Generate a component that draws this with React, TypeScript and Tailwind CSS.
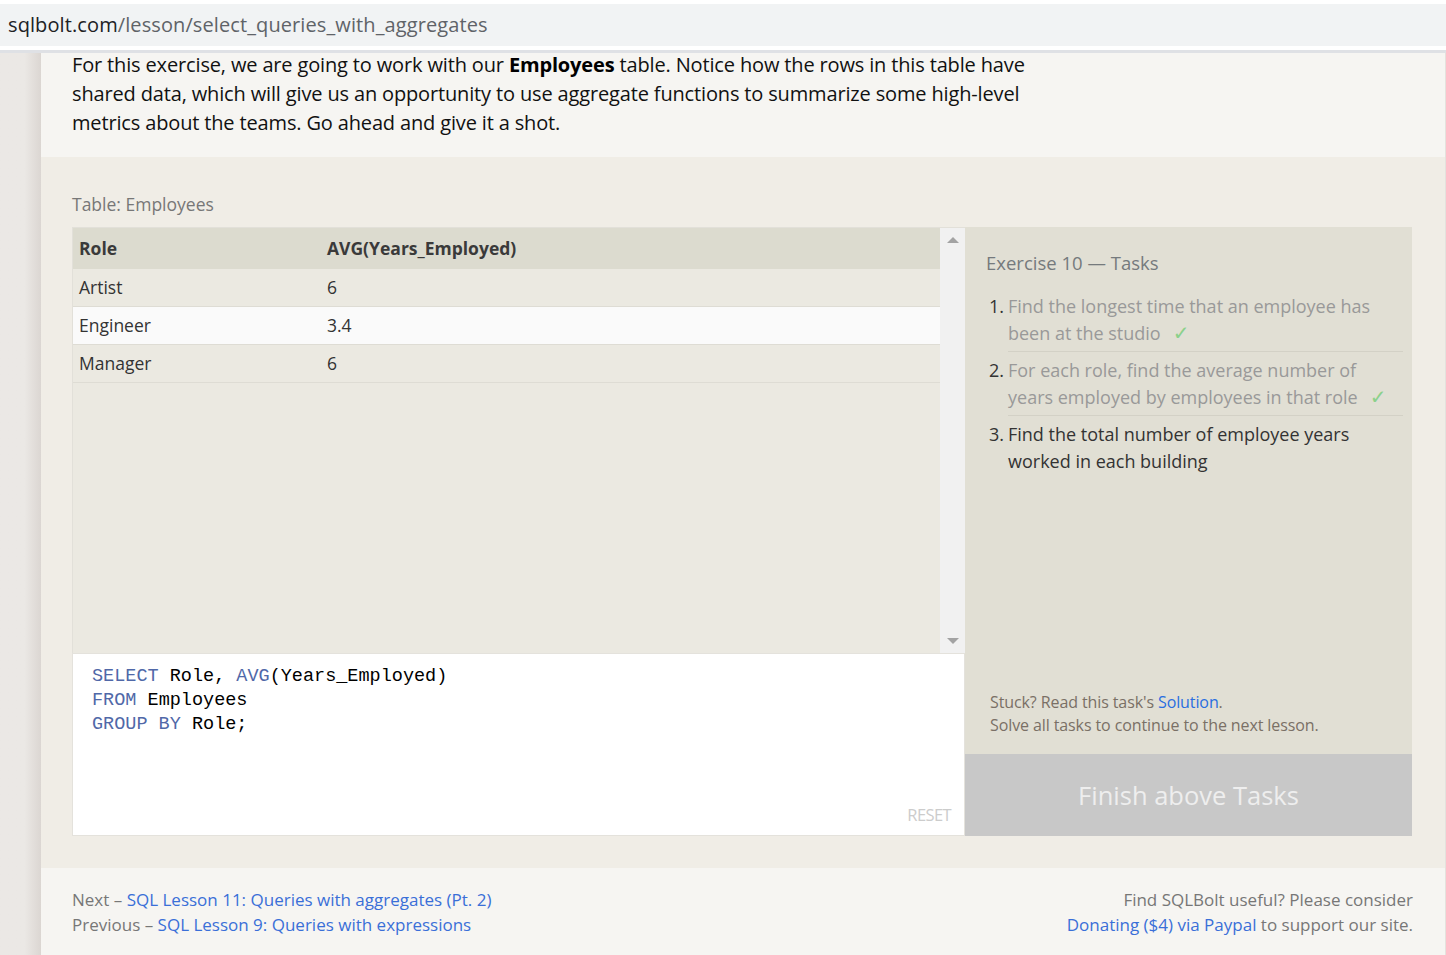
import React from "react";

const sans = "font-['Open_Sans',sans-serif]";

const rows = [
  { role: "Artist", avg: "6", hi: false },
  { role: "Engineer", avg: "3.4", hi: true },
  { role: "Manager", avg: "6", hi: false },
];

const tasks = [
  { text: "Find the longest time that an employee has been at the studio", done: true },
  { text: "For each role, find the average number of years employed by employees in that role", done: true },
  { text: "Find the total number of employee years worked in each building", done: false },
];

const Kw: React.FC<{ children: React.ReactNode }> = ({ children }) => (
  <span className="text-[#5068a8]">{children}</span>
);

export default function App() {
  return (
    <div className={`w-[1446px] h-[955px] overflow-hidden bg-white ${sans}`}>
      {/* address bar */}
      <div className="pt-1 bg-white">
        <div className="h-[42px] bg-[#f1f3f4] flex items-center pl-2 text-[20px] tracking-[0.1px]">
          <span className="text-[#202124]">sqlbolt.com</span>
          <span className="text-[#5f6368]">/lesson/select_queries_with_aggregates</span>
        </div>
        <div className="h-1 bg-white" />
        <div className="h-[3px] bg-[#dfe1e5]" />
      </div>

      <div className="flex h-[902px]">
        <div className="w-[41px] shrink-0 bg-gradient-to-r from-[#ebe8e5] from-60% to-[#dbd6d2]" />
        <div className="flex-1 flex flex-col border-r border-[#e4e2dd]">
          {/* intro */}
          <div className="bg-[#f6f5f2] pl-[31px] pb-[20px]">
            <p className="-mt-[3px] w-[975px] text-[20px] leading-[29px] text-[#111] tracking-[-0.15px]">
              For this exercise, we are going to work with our <b className="text-black">Employees</b> table. Notice how the rows in this table have shared data, which will give us an opportunity to use aggregate functions to summarize some high-level metrics about the teams. Go ahead and give it a shot.
            </p>
          </div>

          {/* exercise */}
          <div className="bg-[#f0ede6] pl-[31px] pr-[33px] pt-[35px] pb-[32px]">
            <div className="text-[17.5px] leading-6 text-[#777] mb-[11px]">Table: Employees</div>
            <div className="flex">
              <div className="w-[893px] shrink-0 flex flex-col">
                <div className="h-[426px] flex border-l border-t border-[#e2e0d9]">
                  <div className="flex-1 bg-[#ebe9e1]">
                    <div className="h-[41px] bg-[#dcdbcf] flex items-center text-[17.5px] font-bold text-[#3a3a3a]">
                      <div className="w-[254px] pl-[6px]">Role</div>
                      <div>AVG(Years_Employed)</div>
                    </div>
                    {rows.map((r) => (
                      <div
                        key={r.role}
                        className={`h-[38px] flex items-center text-[17.5px] text-[#333] border-b border-[#dedcd4] ${r.hi ? "bg-[#fafafa]" : "bg-[#ebe9e1]"}`}
                      >
                        <div className="w-[254px] pl-[6px]">{r.role}</div>
                        <div>{r.avg}</div>
                      </div>
                    ))}
                  </div>
                  <div className="w-[25px] bg-[#f1f1f1] flex flex-col items-center justify-between py-[9px]">
                    <div className="w-0 h-0 border-l-[6px] border-r-[6px] border-b-[6px] border-l-transparent border-r-transparent border-b-[#a3a3a3]" />
                    <div className="w-0 h-0 border-l-[6px] border-r-[6px] border-t-[6px] border-l-transparent border-r-transparent border-t-[#a3a3a3]" />
                  </div>
                </div>
                <div className="relative h-[183px] bg-white border border-[#e4e2dc] pl-[19px] pt-[11px] font-['Liberation_Mono',monospace] text-[18.5px] leading-6 text-black">
                  <div><Kw>SELECT</Kw> Role, <Kw>AVG</Kw>(Years_Employed)</div>
                  <div><Kw>FROM</Kw> Employees</div>
                  <div><Kw>GROUP BY</Kw> Role;</div>
                  <span className={`absolute right-[13px] bottom-[8px] text-[16.5px] tracking-[-0.6px] text-[#cccccc] ${sans}`}>RESET</span>
                </div>
              </div>

              <div className="flex-1 flex flex-col">
                <div className="flex-1 bg-[#e1dfd4] pl-[21px] pr-[9px] pt-[24px] flex flex-col">
                  <div className="text-[18.5px] leading-6 text-[#757a7d]">Exercise 10 — Tasks</div>
                  <ol className="mt-[18px]">
                    {tasks.map((t, i) => (
                      <li key={i} className="flex text-[18px] leading-[27px]">
                        <span className="w-[22px] shrink-0 text-right pr-[4px] text-[#333]">{i + 1}.</span>
                        <div
                          className={`flex-1 ${i < tasks.length - 1 ? "border-b border-[#d3d1c6] pb-[4px] mb-[5px]" : ""} ${t.done ? "text-[#999]" : "text-[#333]"}`}
                        >
                          {t.text}
                          {t.done && (
                            <span className="ml-[12px] text-[20px] leading-[0] text-[#8bd18b] font-['DejaVu_Sans',sans-serif]">✓</span>
                          )}
                        </div>
                      </li>
                    ))}
                  </ol>
                  <div className="mt-auto pl-[4px] pb-[17px] text-[16px] leading-[23px] text-[#7a7066] tracking-[-0.1px]">
                    <div>
                      Stuck? Read this task's <span className="text-[#2a6ee0]">Solution</span>.
                    </div>
                    <div>Solve all tasks to continue to the next lesson.</div>
                  </div>
                </div>
                <div className="h-[82px] bg-[#c8c8c8] flex items-center justify-center text-[25.5px] text-[#eeeeee]">
                  Finish above Tasks
                </div>
              </div>
            </div>
          </div>

          {/* footer */}
          <div className="flex-1 bg-[#f6f5f2] pl-[31px] pr-[32px] pt-[19px] flex justify-between text-[17px] leading-[25px] text-[#777]">
            <div>
              <div>
                Next – <span className="text-[#3a6fd8]">SQL Lesson 11: Queries with aggregates (Pt. 2)</span>
              </div>
              <div>
                Previous – <span className="text-[#3a6fd8]">SQL Lesson 9: Queries with expressions</span>
              </div>
            </div>
            <div className="text-right">
              <div>Find SQLBolt useful? Please consider</div>
              <div>
                <span className="text-[#3a6fd8]">Donating ($4) via Paypal</span> to support our site.
              </div>
            </div>
          </div>
        </div>
      </div>
    </div>
  );
}
